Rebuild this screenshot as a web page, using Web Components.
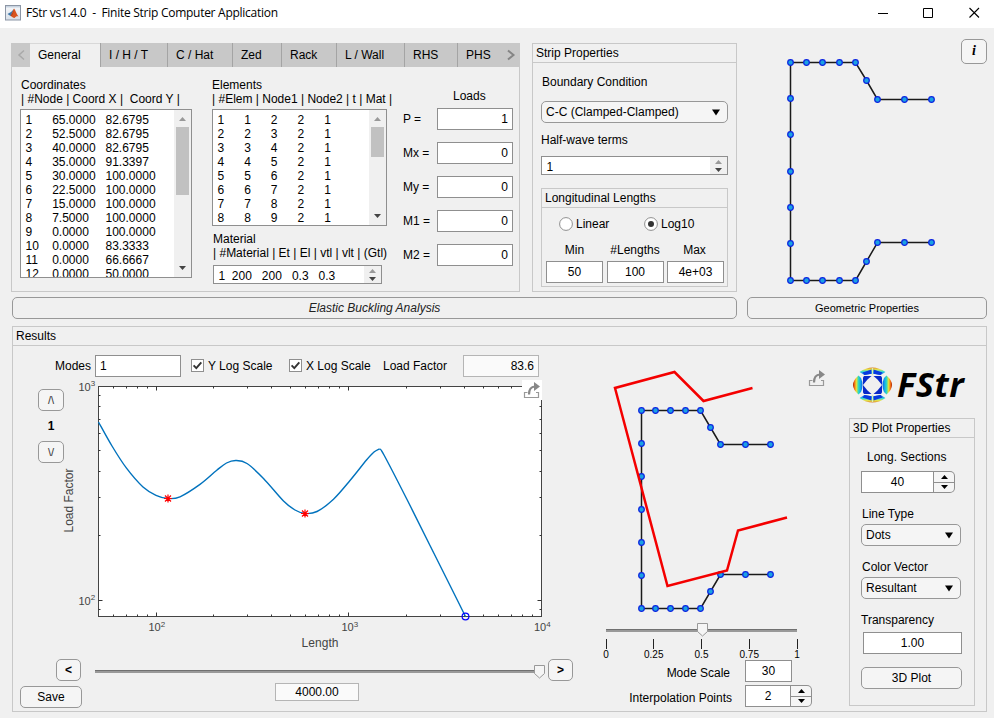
<!DOCTYPE html>
<html lang="en">
<head>
<meta charset="utf-8">
<title>FStr vs1.4.0</title>
<style>
html,body{margin:0;height:100%;overflow:hidden}
body{font:12px/14px "Liberation Sans",Arial,sans-serif;color:#000;background:#f0f0f0}
</style>
</head>
<body>
<fs-app></fs-app>
<script>
const define = (name, markup, render) => customElements.define(name, class extends HTMLElement {
  constructor() {
    super();
    this.attachShadow({ mode: 'open' }).innerHTML = '<style>*{box-sizing:border-box}:host{box-sizing:border-box}:host([hidden]){display:none}</style>' + markup;
  }
  connectedCallback() { if (render) render.call(this, this.shadowRoot); }
});

/* ---------- basic controls ---------- */
define('fs-button', `<style>
:host{display:flex;align-items:center;justify-content:center;height:22px;border:1px solid #989898;border-radius:5px;background:#f5f5f5;flex:none}
:host([flat]){background:#f0f0f0}
</style><slot></slot>`);

define('fs-field', `<style>
:host{display:flex;align-items:center;justify-content:center;height:22px;border:1px solid #8f8f8f;background:#fff;flex:none;padding:0 4px}
:host([right]){justify-content:flex-end}
:host([left]){justify-content:flex-start}
:host([readonly]){border-color:#b5b5b5;background:#fafafa}
</style><slot></slot>`);

define('fs-dropdown', `<style>
:host{display:flex;align-items:center;justify-content:space-between;height:22px;border:1px solid #989898;border-radius:5px;background:#f5f5f5;padding:0 7px 0 4px;flex:none}
svg{display:block}
</style><slot></slot><svg width="8" height="7"><path d="M0 .5h8L4 6.500z"/></svg>`);

define('fs-spinner', `<style>
:host{display:flex;height:22px;flex:none}
.v{flex:1;display:flex;align-items:center;justify-content:center;border:1px solid #8f8f8f;background:#fff;padding-right:0}
.b{width:21px;border:1px solid #8f8f8f;border-left:0;border-radius:0 5px 5px 0;background:#f5f5f5;display:flex;flex-direction:column}
.b div{flex:1;display:flex;align-items:center;justify-content:center}
.b div+div{border-top:1px solid #8f8f8f}
</style><div class="v"><slot></slot></div><div class="b"><div><svg width="7" height="4"><path d="M0 4h7L3.5 0z"/></svg></div><div><svg width="7" height="4"><path d="M0 0h7L3.5 4z"/></svg></div></div>`);

define('fs-check', `<style>
:host{display:flex;align-items:center;gap:4px;flex:none}
svg{display:block}
</style><svg width="13" height="13"><rect x=".5" y=".5" width="12" height="12" fill="#fff" stroke="#8f8f8f"/><path d="M2.6 6.4l2.7 2.8 5-5.9" fill="none" stroke="#333" stroke-width="1.9"/></svg><slot></slot>`);

define('fs-radio', `<style>
:host{display:flex;align-items:center;gap:3px;flex:none}
svg{display:block} .dot{display:none} :host([checked]) .dot{display:inline}
</style><svg width="14" height="14"><circle cx="7" cy="7" r="6.4" fill="#fff" stroke="#8f8f8f"/><circle class="dot" cx="7" cy="7" r="3" fill="#333"/></svg><slot></slot>`);

/* text list with a scroll bar; thumb = thumb height, 0 for none */
define('fs-list', `<style>
:host{display:flex;border:1px solid #8f8f8f;background:#fff;overflow:hidden;flex:none}
.t{flex:1;white-space:pre;tab-size:8;line-height:14px;padding:3px 0 0 4.5px;overflow:hidden}
.s{width:17px;background:#f0f0f0;display:flex;flex-direction:column;justify-content:space-between;align-items:center;padding:7px 0 7px 0;flex:none}
:host([short]) .s{padding:3px 0 2px}
.th{width:13px;background:#c1c1c1;margin-top:6px}
.sp{flex:1}
svg{display:block;flex:none}
</style><div class="t"></div><div class="s"><svg width="7" height="4"><path d="M0 4h7L3.5 0z" fill="#999"/></svg><div class="th"></div><div class="sp"></div><svg width="7" height="4"><path d="M0 0h7L3.5 4z" fill="#444"/></svg></div>`,
function (r) {
  r.querySelector('.t').textContent = (this.getAttribute('rows') || '').split('|').join('\n').replace(/;/g, '\t');
  const h = +this.getAttribute('thumb') || 0, th = r.querySelector('.th');
  if (h) th.style.height = h + 'px'; else th.remove();
});

define('fs-panel', `<style>
:host{display:flex;flex-direction:column;border:1px solid #c8c8c8;flex:none}
.h{height:19px;border-bottom:1px solid #c8c8c8;padding:2px 0 0 3px;white-space:nowrap;flex:none}
</style><div class="h"></div><slot></slot>`, function (r) { r.querySelector('.h').textContent = this.getAttribute('heading'); });

define('fs-share', `<style>:host{display:block;width:20px;height:20px} :host([boxed]){background:#fff}svg{display:block}</style>
<svg width="20" height="20"><path d="M5.500 12.500h-3v5h14v-5h-2.500" fill="none" stroke="#999" stroke-width="1.200"/><path d="M7 14.500C7 9.500 9 6.500 13 6.500" fill="none" stroke="#888" stroke-width="2.200"/><path d="M12 2l6 4.500-6 4.500z" fill="#888"/></svg>`);

define('fs-slider', `<style>
:host{display:flex;align-items:center;height:14px;position:relative;flex:none}
.t{height:3px;flex:1;background:linear-gradient(#707070 0 1px,#999 1px)}
svg{position:absolute;top:0}
</style><div class="t"></div><svg width="12" height="14"><path d="M.5 .5h10v8l-5 4.500-5-4.500z" fill="#f5f5f5" stroke="#999"/></svg>`,
function (r) { r.querySelector('svg').style.left = this.getAttribute('at') + 'px'; });

/* ---------- title bar ---------- */
define('fs-titlebar', `<style>
:host{display:flex;align-items:center;height:28px;background:#fff;padding:0 14px 3px 5px;flex:none;font:12px/16px "Open Sans","Noto Sans",sans-serif}
.t{flex:1;margin-left:5px;white-space:pre;letter-spacing:-.27px}
svg{display:block}
</style>
<svg width="16" height="16"><defs><linearGradient id="f" x2="0" y2="1"><stop stop-color="#f8f9fb"/><stop offset="1" stop-color="#d7dfe8"/></linearGradient></defs><rect x=".5" y=".5" width="15" height="14.500" fill="url(#f)" stroke="#8c96a5"/><rect x="1" y="1" width="14" height="1.500" fill="#c7d3e0"/><path d="M2.500 9l3.500-2 3-3-1.500 6-2 1z" fill="#3e76a8"/><path d="M9 3.500c1.500 1.500 2.500 6 4.500 8-1.500-.5-2.500-.3-4 1.500-1.500 0-2.500-1.500-4-2z" fill="#d9541e"/><path d="M9 3.500c-.2 3-.8 5-3.500 7.500 2-.5 3.200-3 3.500-7.500z" fill="#7d1f12"/></svg>
<div class="t">FStr vs1.4.0&nbsp; -&nbsp; Finite Strip Computer Application</div>
<svg width="102" height="12"><path d="M0 6.500h10M45.500 1.500h9v9h-9z" fill="none" stroke="#000"/><path d="M91.500 1l9.500 9.500M101 1l-9.500 9.500" fill="none" stroke="#000" stroke-width="1.100"/></svg>`);

/* ---------- tabs with the model data ---------- */
define('fs-tabs', `<style>
:host{display:flex;flex-direction:column;width:509px;height:249px;border:1px solid #c8c8c8;flex:none}
.bar{display:flex;height:24px;background:#c8c8c8;margin:-1px -1px 0;flex:none}
.tab{border-left:1px solid #a4a4a4;padding:5px 0 0 8px;height:24px;white-space:nowrap}
.tab.on{background:#f0f0f0;border:0;border-top:1px solid #d8d8d8;padding-top:4px}
.ar{width:19px;display:flex;align-items:center;justify-content:center}
.grow{flex:1;display:flex;justify-content:space-between;align-items:center}
.body{display:flex;padding:11px 0 0 8px}
.h{white-space:pre;padding-left:1px;height:31px}
.c2{width:175px;margin-left:20px}
.c3{margin-left:16px;width:110px;display:flex;flex-direction:column}
.loads{padding:11px 0 12px 50px;line-height:14px;height:30px}
.row{display:flex;justify-content:space-between;align-items:center;margin-bottom:12px}
</style>
<div class="bar"><div class="ar"><svg width="8" height="12"><path d="M7 1.500L2 6l5 4.500" fill="none" stroke="#a9a9a9" stroke-width="1.500"/></svg></div>
<div class="tab on" style="width:70px">General</div><div class="tab" style="width:67px">I / H / T</div><div class="tab" style="width:65px">C / Hat</div><div class="tab" style="width:49px">Zed</div><div class="tab" style="width:55px">Rack</div><div class="tab" style="width:68px">L / Wall</div><div class="tab" style="width:53px">RHS</div><div class="tab grow" style="padding:0 4px 0 8px">PHS<svg width="10" height="12"><path d="M2 1.500L7.500 6 2 10.500" fill="none" stroke="#858585" stroke-width="2"/></svg></div></div>
<div class="body">
<div><div class="h">Coordinates
| #Node | Coord X |&nbsp; Coord Y |</div><fs-list style="width:172px;height:169px" thumb="68" rows="1;65.0000;82.6795|2;52.5000;82.6795|3;40.0000;82.6795|4;35.0000;91.3397|5;30.0000;100.0000|6;22.5000;100.0000|7;15.0000;100.0000|8;7.5000;100.0000|9;0.0000;100.0000|10;0.0000;83.3333|11;0.0000;66.6667|12;0.0000;50.0000"></fs-list></div>
<div class="c2"><div class="h" style="padding-left:0">Elements
| #Elem | Node1 | Node2 | t | Mat |</div><fs-list style="width:175px;height:117px" thumb="30" rows="1;1;2;2;1|2;2;3;2;1|3;3;4;2;1|4;4;5;2;1|5;5;6;2;1|6;6;7;2;1|7;7;8;2;1|8;8;9;2;1"></fs-list>
<div class="h" style="height:39px;padding-top:6px">Material
| #Material | Et | El | vtl | vlt | (Gtl)</div><fs-list short style="width:169px;height:19px;margin-left:1px" rows="1  200   200   0.3   0.3"></fs-list></div>
<div class="c3"><div class="loads">Loads</div>
<div class="row">P =<fs-field right style="width:76px">1</fs-field></div>
<div class="row">Mx =<fs-field right style="width:76px">0</fs-field></div>
<div class="row">My =<fs-field right style="width:76px">0</fs-field></div>
<div class="row">M1 =<fs-field right style="width:76px">0</fs-field></div>
<div class="row">M2 =<fs-field right style="width:76px">0</fs-field></div></div>
</div>`);

/* ---------- strip properties ---------- */
define('fs-strip', `<style>
:host{display:block;flex:none}
.in{padding:12px 8px 0;display:flex;flex-direction:column}
.radios{display:flex;padding:9px 0 0 17px;height:35px}
.g{display:grid;grid-template-columns:57px 57px 57px;justify-content:space-between;padding:0 3px 0 4px;text-align:center}
.g span{height:18px;white-space:nowrap}
</style>
<fs-panel heading="Strip Properties" style="width:205px;height:249px"><div class="in">
<div style="padding-left:1px;height:26px">Boundary Condition</div>
<fs-dropdown>C-C (Clamped-Clamped)</fs-dropdown>
<div style="height:33px;padding-top:10px">Half-wave terms</div>
<fs-list short style="height:19px" rows="1"></fs-list>
<fs-panel heading="Longitudinal Lengths" style="height:99px;margin-top:13px">
<div class="radios"><fs-radio style="height:14px;width:85px">Linear</fs-radio><fs-radio checked style="height:14px">Log10</fs-radio></div>
<div class="g"><span>Min</span><span>#Lengths</span><span style="padding-right:2px">Max</span><fs-field>50</fs-field><fs-field>100</fs-field><fs-field>4e+03</fs-field></div>
</fs-panel></div></fs-panel>`);

/* ---------- cross-section drawing ---------- */
define('fs-section', `<style>:host{display:block}svg{display:block;overflow:visible}</style><svg></svg>`, function (r) {
  const n = k => this.getAttribute(k).split(' ').map(Number);
  const [w, h] = n('size'), xs = n('xs'), ys = n('ys'), lip = n('lip');
  const pts = [];
  pts.push([xs[7], lip[1]], [xs[6], lip[1]], [xs[5], lip[1]], [lip[4], lip[0]]);
  for (let i = 4; i >= 0; i--) pts.push([xs[i], ys[0]]);
  for (let i = 1; i < 7; i++) pts.push([xs[0], ys[i]]);
  for (let i = 1; i < 5; i++) pts.push([xs[i], ys[6]]);
  pts.push([lip[4], lip[2]], [xs[5], lip[3]], [xs[6], lip[3]], [xs[7], lip[3]]);
  const s = r.querySelector('svg');
  s.setAttribute('width', w); s.setAttribute('height', h);
  const red = this.getAttribute('mode');
  s.innerHTML = `<polyline points="${pts.join(' ')}" fill="none" stroke="#1a1a1a" stroke-width="1.5"/>` +
    pts.map(p => `<circle cx="${p[0]}" cy="${p[1]}" r="2.8" fill="#1ba1e2" stroke="#0a22e0" stroke-width="1.200"/>`).join('') +
    (red ? `<polyline points="${red}" fill="none" stroke="#f40000" stroke-width="2.500"/>` : '');
});

/* ---------- signature curve ---------- */
define('fs-curve', `<style>:host{display:block;position:relative;width:493px;height:275px;flex:none}svg{display:block;overflow:visible}text{fill:#444}fs-share{position:absolute;left:458px;top:0}</style>
<svg width="493" height="275" viewBox="64 380 493 275"></svg><fs-share boxed></fs-share>`, function (r) {
  const L = 98.5, R = 541.5, T = 386.5, B = 616.5;
  const X = v => 156.5 + (Math.log10(v) - 2) * 192.6, Y = v => 600.5 - (Math.log10(v) - 2) * 214;
  let d = '';
  for (let e = 1; e < 4; e++) for (let m = 1; m < 10; m++) {
    const v = m * 10 ** e, x = Math.round(X(v) + .01) - .5, k = m === 1 ? 4 : 2;
    if (x > L && x < R - 3) d += `M${x} ${T}v${k}M${x} ${B}v${-k}`;
  }
  for (const v of [90, 100, 200, 300, 400, 500, 600, 700, 800, 900]) {
    const y = Math.round(Y(v)) - .5, k = v === 100 ? 4 : 2;
    d += `M${L} ${y}h${k}M${R} ${y}h${-k}`;
  }
  const spline = p => {
    let s = `M${p[0]}`;
    for (let i = 0; i < p.length - 1; i++) {
      const a = p[i - 1] || p[i], b = p[i], c = p[i + 1], e = p[i + 2] || c;
      s += `C${b[0] + (c[0] - a[0]) / 6} ${b[1] + (c[1] - a[1]) / 6} ${c[0] - (e[0] - b[0]) / 6} ${c[1] - (e[1] - b[1]) / 6} ${c[0]} ${c[1]}`;
    }
    return s;
  };
  const c1 = [[98.5, 422], [112, 446], [126.5, 468.2], [143, 487], [156, 495.3], [168, 498.5], [180, 496.8], [200, 484.4], [216.500, 470.500], [226.500, 463], [236, 460.5], [247, 463.5], [263.500, 478.500], [283.500, 501], [295, 510], [305, 513.5], [317, 511.500], [333.500, 499.200], [350, 480.500], [366.500, 460], [374, 452], [379.500, 448.8]];
  const c2 = [[379.500, 448.8], [384, 455], [406.500, 498.5], [430, 545.5], [465.5, 616.5]];
  const star = (x, y) => `<path d="M${x - 4} ${y}h8M${x} ${y - 4}v8M${x - 3} ${y - 3}l6 6M${x - 3} ${y + 3}l6-6" stroke="#f00" stroke-width="1.200" fill="none"/>`;
  const pow = (x, y, e) => `<text x="${x}" y="${y}" font-size="11">10<tspan dy="-4.500" font-size="8">${e}</tspan></text>`;
  r.querySelector('svg').innerHTML = `<rect x="${L}" y="${T}" width="${R - L}" height="${B - T}" fill="#fff" stroke="#444"/><path d="${d}" stroke="#333"/>
  <path d="${spline(c1)}${spline(c2)}" fill="none" stroke="#0072bd" stroke-width="1.400"/>${star(168, 498.5)}${star(305, 513.5)}
  <circle cx="465.500" cy="616.500" r="3.400" fill="none" stroke="#00f" stroke-width="1.200"/>
  ${pow(78.5, 390.5, 3)}${pow(78.5, 604.5, 2)}${pow(148.5, 631, 2)}${pow(341.500, 631, 3)}${pow(534, 631, 4)}
  <text x="320" y="647" font-size="12" text-anchor="middle" textLength="37">Length</text>
  <text transform="translate(72.500 500.500) rotate(-90)" font-size="12" text-anchor="middle">Load Factor</text>`;
});

/* ---------- logo ---------- */
define('fs-logo', `<style>:host{display:flex;align-items:center;gap:5px;height:38px;flex:none}svg{display:block;flex:none}
span{font:italic bold 34.5px/36px "Open Sans","Noto Sans",sans-serif;letter-spacing:.5px;margin-top:-2px}</style>
<svg width="39" height="36" viewBox="-19.5 -18 39 36"><defs>
<linearGradient id="g" gradientUnits="userSpaceOnUse" x1="0" x2="0" y1="-17.500" y2="-8.500"><stop stop-color="#d88030"/><stop offset=".2" stop-color="#f0e040"/><stop offset=".45" stop-color="#38d8d0"/><stop offset=".7" stop-color="#1080f0"/><stop offset="1" stop-color="#0020c0"/></linearGradient>
<linearGradient id="v" gradientUnits="userSpaceOnUse" x1="8.500" x2="19.500" y1="0" y2="0"><stop stop-color="#0030d0"/><stop offset=".3" stop-color="#10a0f0"/><stop offset=".5" stop-color="#30d8c0"/><stop offset=".7" stop-color="#f0e030"/><stop offset=".88" stop-color="#f06010"/><stop offset="1" stop-color="#a02000"/></linearGradient></defs>
<g id="t"><path d="M-13 -13Q0 -22 13 -13L8 -10 0 -11.500 -8 -10z" fill="url(#g)"/><path d="M-10 -12.500L-1 -15.500V-11.200L-8 -10zM10 -12.500L1 -15.500V-11.200L8 -10z" fill="#0838e0"/><path d="M0 -17v7" stroke="#d8f0b0" stroke-width="1.200"/></g>
<use href="#t" transform="scale(1 -1)"/>
<path id="q" d="M14 -9.500Q25 0 14 9.500L11.500 7Q8.500 0 11.500 -7z" fill="url(#v)"/><use href="#q" transform="scale(-1 1)"/>
<g fill="#0828c8"><path id="w" d="M-9.500 -9L-1 -9 -5 -5.500 -9.500 0z"/><use href="#w" transform="scale(-1 1)"/><use href="#w" transform="scale(1 -1)"/><use href="#w" transform="scale(-1 -1)"/></g>
<path d="M-14 -12.500L-9 -8M14 -12.500L9 -8M-14 12.500L-9 8M14 12.500L9 8" stroke="#f0f0f0" stroke-width="1.300"/></svg><span>FStr</span>`);

/* ---------- 3D plot properties ---------- */
define('fs-plot3d', `<style>:host{display:block;flex:none}
.in{display:flex;flex-direction:column;padding:12px 13px 0 11px}
.l{white-space:nowrap}
</style><fs-panel heading="3D Plot Properties" style="width:126px;height:288px"><div class="in">
<div class="l" style="height:21px;padding-left:6px">Long. Sections</div>
<fs-spinner style="width:94px">40</fs-spinner>
<div class="l" style="height:31px;padding:14px 0 0 1px">Line Type</div>
<fs-dropdown style="width:100px">Dots</fs-dropdown>
<div class="l" style="height:31px;padding:14px 0 0 1px">Color Vector</div>
<fs-dropdown style="width:100px">Resultant</fs-dropdown>
<div class="l" style="height:33px;padding-top:14px">Transparency</div>
<fs-field style="width:99px;margin-left:2px">1.00</fs-field>
<fs-button style="width:101px;margin-top:13px">3D Plot</fs-button>
</div></fs-panel>`);

/* ---------- results ---------- */
define('fs-results', `<style>
:host{display:block;flex:none}
.in{display:flex;height:364px}
.left{width:577px}
.top{display:flex;align-items:center;padding:8px 0 0 42px;height:31px}
.mid{display:flex;height:278px;padding-top:3px}
.step{width:51px;padding:9px 0 0 25px;display:flex;flex-direction:column;align-items:stretch;text-align:center;flex:none}
.step b{height:30px;padding-top:8px}
.step fs-button{font-size:11px;color:#333}
.sl{display:flex;align-items:center;height:22px;padding-left:43px;margin-top:4px}
.sv{display:flex;padding-left:7px;align-items:flex-start}
.cen{width:250px;display:flex;flex-direction:column}
.scale{display:flex;justify-content:space-between;width:211px;margin-left:6px;font-size:10px;line-height:11px}
.scale div{width:20px;display:flex;flex-direction:column;align-items:center}
.scale i{width:1px;height:10px;background:#222}
.scale span{white-space:nowrap;margin-top:0}
.r{display:flex;align-items:center;justify-content:flex-end}
.right{width:140px;padding:20px 0 0 9px}
</style>
<fs-panel heading="Results" style="width:975px;height:386px"><div class="in">
<div class="left">
<div class="top"><span style="width:40px">Modes</span><fs-field left style="width:86px;margin-right:10px">1</fs-field><fs-check style="width:98px">Y Log Scale</fs-check><fs-check style="width:94px">X Log Scale</fs-check><span style="width:80px">Load Factor</span><fs-field right readonly style="width:76px">83.6</fs-field></div>
<div class="mid"><div class="step"><fs-button>/\\</fs-button><b>1</b><fs-button>\\/</fs-button></div><fs-curve></fs-curve></div>
<div class="sl"><fs-button style="width:25px"><b>&lt;</b></fs-button><fs-slider at="439" style="width:445px;margin:3px 8px 0 14px"></fs-slider><fs-button style="width:25px"><b>&gt;</b></fs-button></div>
<div class="sv"><fs-button style="width:62px;margin-top:5px">Save</fs-button><fs-field readonly style="width:84px;height:18px;margin:2px 0 0 193px">4000.00</fs-field></div>
</div>
<div class="cen">
<div style="display:flex;height:277px;padding-top:21px"><fs-section size="216 257" style="width:216px" xs="51.500 65.500 80.500 95.500 110.500 130.500 155.500 180.500" ys="43.500 76.500 109.500 142.500 175.500 208.500 241.500" lip="60.500 77.500 224.500 207.500 120.500" mode="162.500,21 113.500,34 84.500,5 25,21 77.500,219 137,203.500 148,163.500 197,150.500"></fs-section><fs-share style="margin:1px 0 0 1px"></fs-share></div>
<fs-slider at="91" style="width:191px;margin:0 0 2px 16px"></fs-slider>
<div class="scale"><div><i></i><span>0</span></div><div><i></i><span>0.25</span></div><div><i></i><span>0.5</span></div><div><i></i><span>0.75</span></div><div><i></i><span>1</span></div></div>
<div class="r" style="padding-right:48px"><span style="padding:3px 15px 0 0">Mode Scale</span><fs-field style="width:47px">30</fs-field></div>
<div class="r" style="padding-right:28px;margin-top:3px"><span style="padding:3px 13px 0 0">Interpolation Points</span><fs-spinner style="width:67px">2</fs-spinner></div>
</div>
<div class="right"><fs-logo style="margin-left:4px"></fs-logo><fs-plot3d style="margin-top:14px"></fs-plot3d></div>
</div></fs-panel>`);

/* ---------- window ---------- */
define('fs-app', `<style>
:host{display:flex;flex-direction:column;width:994px;height:718px;background:#f0f0f0}
.top{display:flex;height:269px;align-items:flex-start;padding-left:11px}
.geo{display:flex;justify-content:space-between;width:250px;padding-top:11px}
.btns{display:flex;gap:10px;padding-left:12px}
</style>
<fs-titlebar></fs-titlebar>
<div class="top"><fs-tabs style="margin:15px 12px 0 0"></fs-tabs><fs-strip style="margin-top:15px"></fs-strip>
<div class="geo"><fs-section size="200 250" xs="53.500 69.500 85.500 102.500 118.500 140.500 167.500 194.500" ys="23.500 59.500 95.500 132.500 168.500 204.500 241.500" lip="41.500 60.500 222.500 203.500 129.500"></fs-section><fs-button style="width:26px;height:25px"><b style="font:italic bold 14px 'Liberation Serif',serif;margin-top:-2px">i</b></fs-button></div></div>
<div class="btns"><fs-button flat style="width:725px;font-style:italic;color:#222">Elastic Buckling Analysis</fs-button><fs-button flat style="width:240px;font-size:11px">Geometric Properties</fs-button></div>
<fs-results style="margin:7px 0 0 12px"></fs-results>`);
</script>
</body>
</html>
